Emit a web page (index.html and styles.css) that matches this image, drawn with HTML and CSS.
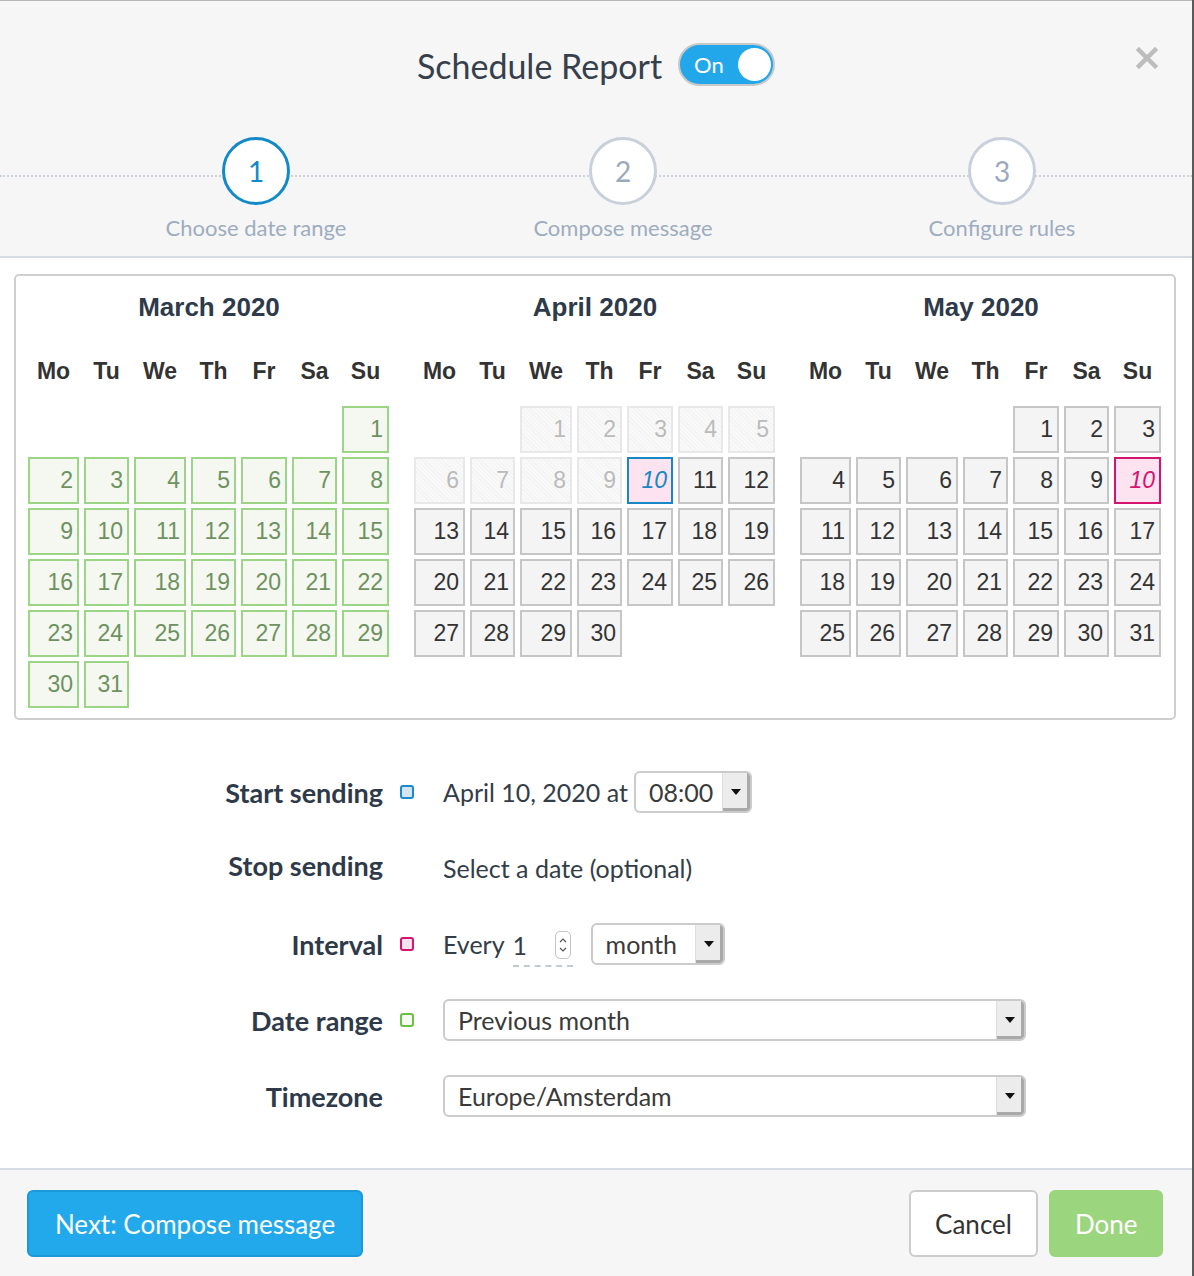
FILE: index.html
```html
<!DOCTYPE html>
<html lang="en">
<head>
    <meta charset="UTF-8">
    <meta name="viewport" content="width=device-width, initial-scale=1.0">
    <title>Schedule Report</title>
    <link rel="stylesheet" href="styles.css">
</head>
<body>
    <div class="modal">
        <!-- Header with title, toggle and steps -->
        <header class="header">
            <div class="title-row">
                <h1 class="title">Schedule Report</h1>
                <div class="toggle">
                    <span class="toggle-label">On</span>
                    <span class="knob"></span>
                </div>
                <button class="close" aria-label="Close">
                    <svg width="22" height="22" viewBox="0 0 22 22">
                        <path d="M3 3 L19 19 M19 3 L3 19" stroke="#bdbdbd" stroke-width="4.5" stroke-linecap="square"/>
                    </svg>
                </button>
            </div>
            <ol class="steps">
                <li class="step active"><span class="circle">1</span><span class="step-label">Choose date range</span></li>
                <li class="step"><span class="circle">2</span><span class="step-label">Compose message</span></li>
                <li class="step"><span class="circle">3</span><span class="step-label">Configure rules</span></li>
            </ol>
        </header>

        <main class="content">
            <!-- Calendar with three months -->
            <div class="calendar">
                <div class="month">
                    <div class="month-title">March 2020</div>
                    <div class="dow-row">
                        <span>Mo</span><span>Tu</span><span>We</span><span>Th</span><span>Fr</span><span>Sa</span><span>Su</span>
                    </div>
                    <div class="days">
                        <span></span><span></span><span></span><span></span><span></span><span></span>
                        <span class="day range">1</span>
                        <span class="day range">2</span><span class="day range">3</span><span class="day range">4</span><span class="day range">5</span><span class="day range">6</span><span class="day range">7</span><span class="day range">8</span>
                        <span class="day range">9</span><span class="day range">10</span><span class="day range">11</span><span class="day range">12</span><span class="day range">13</span><span class="day range">14</span><span class="day range">15</span>
                        <span class="day range">16</span><span class="day range">17</span><span class="day range">18</span><span class="day range">19</span><span class="day range">20</span><span class="day range">21</span><span class="day range">22</span>
                        <span class="day range">23</span><span class="day range">24</span><span class="day range">25</span><span class="day range">26</span><span class="day range">27</span><span class="day range">28</span><span class="day range">29</span>
                        <span class="day range">30</span><span class="day range">31</span>
                    </div>
                </div>

                <div class="month">
                    <div class="month-title">April 2020</div>
                    <div class="dow-row">
                        <span>Mo</span><span>Tu</span><span>We</span><span>Th</span><span>Fr</span><span>Sa</span><span>Su</span>
                    </div>
                    <div class="days">
                        <span></span><span></span>
                        <span class="day disabled">1</span><span class="day disabled">2</span><span class="day disabled">3</span><span class="day disabled">4</span><span class="day disabled">5</span>
                        <span class="day disabled">6</span><span class="day disabled">7</span><span class="day disabled">8</span><span class="day disabled">9</span><span class="day start">10</span><span class="day">11</span><span class="day">12</span>
                        <span class="day">13</span><span class="day">14</span><span class="day">15</span><span class="day">16</span><span class="day">17</span><span class="day">18</span><span class="day">19</span>
                        <span class="day">20</span><span class="day">21</span><span class="day">22</span><span class="day">23</span><span class="day">24</span><span class="day">25</span><span class="day">26</span>
                        <span class="day">27</span><span class="day">28</span><span class="day">29</span><span class="day">30</span>
                    </div>
                </div>

                <div class="month">
                    <div class="month-title">May 2020</div>
                    <div class="dow-row">
                        <span>Mo</span><span>Tu</span><span>We</span><span>Th</span><span>Fr</span><span>Sa</span><span>Su</span>
                    </div>
                    <div class="days">
                        <span></span><span></span><span></span><span></span>
                        <span class="day">1</span><span class="day">2</span><span class="day">3</span>
                        <span class="day">4</span><span class="day">5</span><span class="day">6</span><span class="day">7</span><span class="day">8</span><span class="day">9</span><span class="day interval">10</span>
                        <span class="day">11</span><span class="day">12</span><span class="day">13</span><span class="day">14</span><span class="day">15</span><span class="day">16</span><span class="day">17</span>
                        <span class="day">18</span><span class="day">19</span><span class="day">20</span><span class="day">21</span><span class="day">22</span><span class="day">23</span><span class="day">24</span>
                        <span class="day">25</span><span class="day">26</span><span class="day">27</span><span class="day">28</span><span class="day">29</span><span class="day">30</span><span class="day">31</span>
                    </div>
                </div>
            </div>

            <!-- Schedule settings -->
            <div class="form">
                <div class="label">Start sending</div>
                <div class="marker"><span class="swatch swatch-start"></span></div>
                <div class="value">
                    April 10, 2020 at
                    <div class="select select-time"><span class="select-text">08:00</span><span class="select-btn"></span></div>
                </div>

                <div class="label row-stop">Stop sending</div>
                <div class="marker row-stop"></div>
                <div class="value row-stop">Select a date (optional)</div>

                <div class="label">Interval</div>
                <div class="marker"><span class="swatch swatch-interval"></span></div>
                <div class="value">
                    Every
                    <div class="number">
                        <span class="number-value">1</span>
                        <span class="spinner">
                            <svg width="10" height="18" viewBox="0 0 10 18">
                                <path d="M2 6 L5 3 L8 6 M2 12 L5 15 L8 12" fill="none" stroke="#555" stroke-width="1.2"/>
                            </svg>
                        </span>
                    </div>
                    <div class="select select-unit"><span class="select-text">month</span><span class="select-btn"></span></div>
                </div>

                <div class="label">Date range</div>
                <div class="marker"><span class="swatch swatch-range"></span></div>
                <div class="value">
                    <div class="select select-wide"><span class="select-text">Previous month</span><span class="select-btn"></span></div>
                </div>

                <div class="label">Timezone</div>
                <div class="marker"></div>
                <div class="value">
                    <div class="select select-wide"><span class="select-text">Europe/Amsterdam</span><span class="select-btn"></span></div>
                </div>
            </div>
        </main>

        <footer class="footer">
            <button class="btn btn-primary">Next: Compose message</button>
            <div class="footer-right">
                <button class="btn btn-default">Cancel</button>
                <button class="btn btn-done">Done</button>
            </div>
        </footer>
    </div>
</body>
</html>
```

FILE: styles.css
```css
body {
    margin: 0;
    font-family: Lato, "Open Sans", sans-serif;
    background-color: #ffffff;
    color: #333;
}
.modal {
    width: 1192px;
    height: 1276px;
    border-right: 2px solid #5a5a5a;
    display: flex;
    flex-direction: column;
}

/* Header */
.header {
    background-color: #f6f6f6;
    border-top: 1px solid #b5b5b5;
    border-bottom: 2px solid #d6dbe4;
    height: 255px;
}
.title-row {
    position: relative;
    height: 129px;
    display: flex;
    justify-content: center;
    align-items: center;
    gap: 16px;
}
.title {
    margin: 0;
    font-size: 34px;
    font-weight: 400;
    color: #36404d;
}
.toggle {
    width: 77px;
    height: 39px;
    border: 2px solid #c8c8c8;
    border-radius: 22px;
    background-color: #22a7ea;
    display: flex;
    align-items: center;
    justify-content: space-between;
    padding: 0 2px 0 14px;
    margin-top: -2px;
}
.toggle-label {
    color: #fff;
    font-size: 22px;
}
.knob {
    width: 33px;
    height: 33px;
    border-radius: 50%;
    background-color: #fff;
}
.close {
    position: absolute;
    right: 34px;
    top: 46px;
    background: none;
    border: none;
    padding: 0;
    cursor: pointer;
}

/* Steps */
.steps {
    position: relative;
    list-style: none;
    margin: 0;
    padding: 7px 0 0 106px;
    display: flex;
}
.steps::before {
    content: "";
    position: absolute;
    left: 0;
    right: 0;
    top: 45px;
    border-top: 2px dotted #cdd3dc;
}
.step {
    position: relative;
    width: 300px;
    display: flex;
    flex-direction: column;
    align-items: center;
}
.step:nth-child(2) {
    margin-left: 67px;
}
.step:nth-child(3) {
    margin-left: 79px;
}
.circle {
    width: 62px;
    height: 62px;
    border: 3px solid #c9d0db;
    border-radius: 50%;
    background-color: #fff;
    display: flex;
    align-items: center;
    justify-content: center;
    font-size: 28px;
    color: #9ba9bc;
}
.step.active .circle {
    border-color: #1289c8;
    color: #1289c8;
}
.step-label {
    margin-top: 9px;
    font-size: 22px;
    color: #9eacc0;
}

/* Calendar */
.content {
    flex: 1;
    padding: 16px 16px 0 14px;
}
.calendar {
    border: 2px solid #cfcfcf;
    border-radius: 5px;
    padding: 16px 12px 10px 12px;
    display: flex;
    justify-content: space-between;
    font-family: "Liberation Sans", Arial, sans-serif;
}
.month {
    width: 362px;
}
.month-title {
    text-align: center;
    font-size: 26px;
    font-weight: bold;
    color: #2e3a4a;
    line-height: 30px;
}
.dow-row,
.days {
    display: grid;
    grid-template-columns: 51px 45px 52px 45px 46px 45px 47px;
    column-gap: 5px;
}
.dow-row {
    margin: 34px 0 20px;
    line-height: 30px;
    font-size: 23px;
    font-weight: bold;
    color: #333;
    text-align: center;
}
.days {
    grid-auto-rows: 47px;
    row-gap: 4px;
}
.day {
    border: 2px solid #c6c6c6;
    background-color: #f4f4f4;
    color: #333;
    font-size: 23px;
    line-height: 43px;
    text-align: right;
    padding-right: 4px;
}
.day.range {
    border-color: #9cd585;
    background-color: #f4f8f0;
    color: #6e9160;
}
.day.disabled {
    border-color: #e8e8e8;
    background-color: #f8f8f8;
    background-image: repeating-linear-gradient(45deg, #f3f3f3 0, #f3f3f3 1px, #f9f9f9 1px, #f9f9f9 3px);
    color: #bbbbbb;
}
.day.start {
    border-color: #1688c6;
    background-color: #fde3ef;
    color: #1688c6;
    font-style: italic;
}
.day.interval {
    border-color: #d4146f;
    background-color: #fde3ef;
    color: #d4146f;
    font-style: italic;
}

/* Form */
.form {
    margin: 51px 0 0 -14px;
    display: grid;
    grid-template-columns: 383px 60px 1fr;
    grid-auto-rows: 42px;
    row-gap: 34px;
    align-items: center;
    font-size: 25px;
}
.form .row-stop {
    height: 38px;
}
.label {
    text-align: right;
    font-weight: bold;
    font-size: 27px;
    color: #2e3a4a;
}
.marker {
    padding-left: 17px;
    display: flex;
    align-items: center;
}
.swatch {
    width: 10px;
    height: 10px;
    border: 2px solid;
    border-radius: 3px;
}
.swatch-start {
    border-color: #1a8ac8;
    background-color: #d4e4f1;
}
.swatch-interval {
    border-color: #d4146f;
    background-color: #fce2ee;
}
.swatch-range {
    border-color: #6cbf45;
    background-color: #f4faf0;
}
.value {
    display: flex;
    align-items: center;
    color: #333d48;
}
.select {
    height: 38px;
    border: 2px solid #cbcbcb;
    border-radius: 6px;
    background-color: #fff;
    display: flex;
    align-items: center;
    justify-content: space-between;
    overflow: hidden;
    color: #3a3a3a;
}
.select-text {
    padding-left: 13px;
}
.select-btn {
    position: relative;
    width: 27px;
    height: 100%;
    background-color: #ececec;
    border-left: 1px solid #dedede;
    box-shadow: inset -3px -3px 0 #a9a9a9;
}
.select-btn::after {
    content: "";
    position: absolute;
    left: 8px;
    top: 16px;
    border-left: 5px solid transparent;
    border-right: 5px solid transparent;
    border-top: 6px solid #111;
}
.select-time {
    width: 114px;
    margin-left: 6px;
}
.select-unit {
    width: 130px;
    margin-left: 18px;
}
.select-wide {
    width: 579px;
}
.number {
    display: flex;
    align-items: center;
    width: 60px;
    margin-left: 8px;
    border-bottom: 2px dashed #c3c9d3;
    height: 40px;
    position: relative;
    top: 2px;
}
.number-value {
    flex: 1;
}
.spinner {
    width: 14px;
    height: 26px;
    border: 1px solid #c4c4c4;
    border-radius: 5px;
    display: flex;
    align-items: center;
    justify-content: center;
    margin-right: 2px;
}

/* Footer */
.footer {
    background-color: #f6f6f6;
    border-top: 2px solid #d6dbe4;
    height: 108px;
    box-sizing: border-box;
    padding: 20px 29px 0 27px;
    display: flex;
    justify-content: space-between;
    align-items: flex-start;
}
.footer-right {
    display: flex;
    gap: 11px;
}
.btn {
    height: 67px;
    border-radius: 6px;
    font-family: Lato, "Open Sans", sans-serif;
    font-size: 26px;
    padding: 0 24px;
    cursor: pointer;
}
.btn-primary {
    width: 336px;
    background-color: #22a9ec;
    border: 2px solid #1a98d8;
    color: #fff;
}
.btn-default {
    width: 129px;
    background-color: #fff;
    border: 2px solid #cccccc;
    color: #333;
}
.btn-done {
    width: 114px;
    background-color: #9bd57d;
    border: 2px solid #9bd57d;
    color: #fff;
}
```
